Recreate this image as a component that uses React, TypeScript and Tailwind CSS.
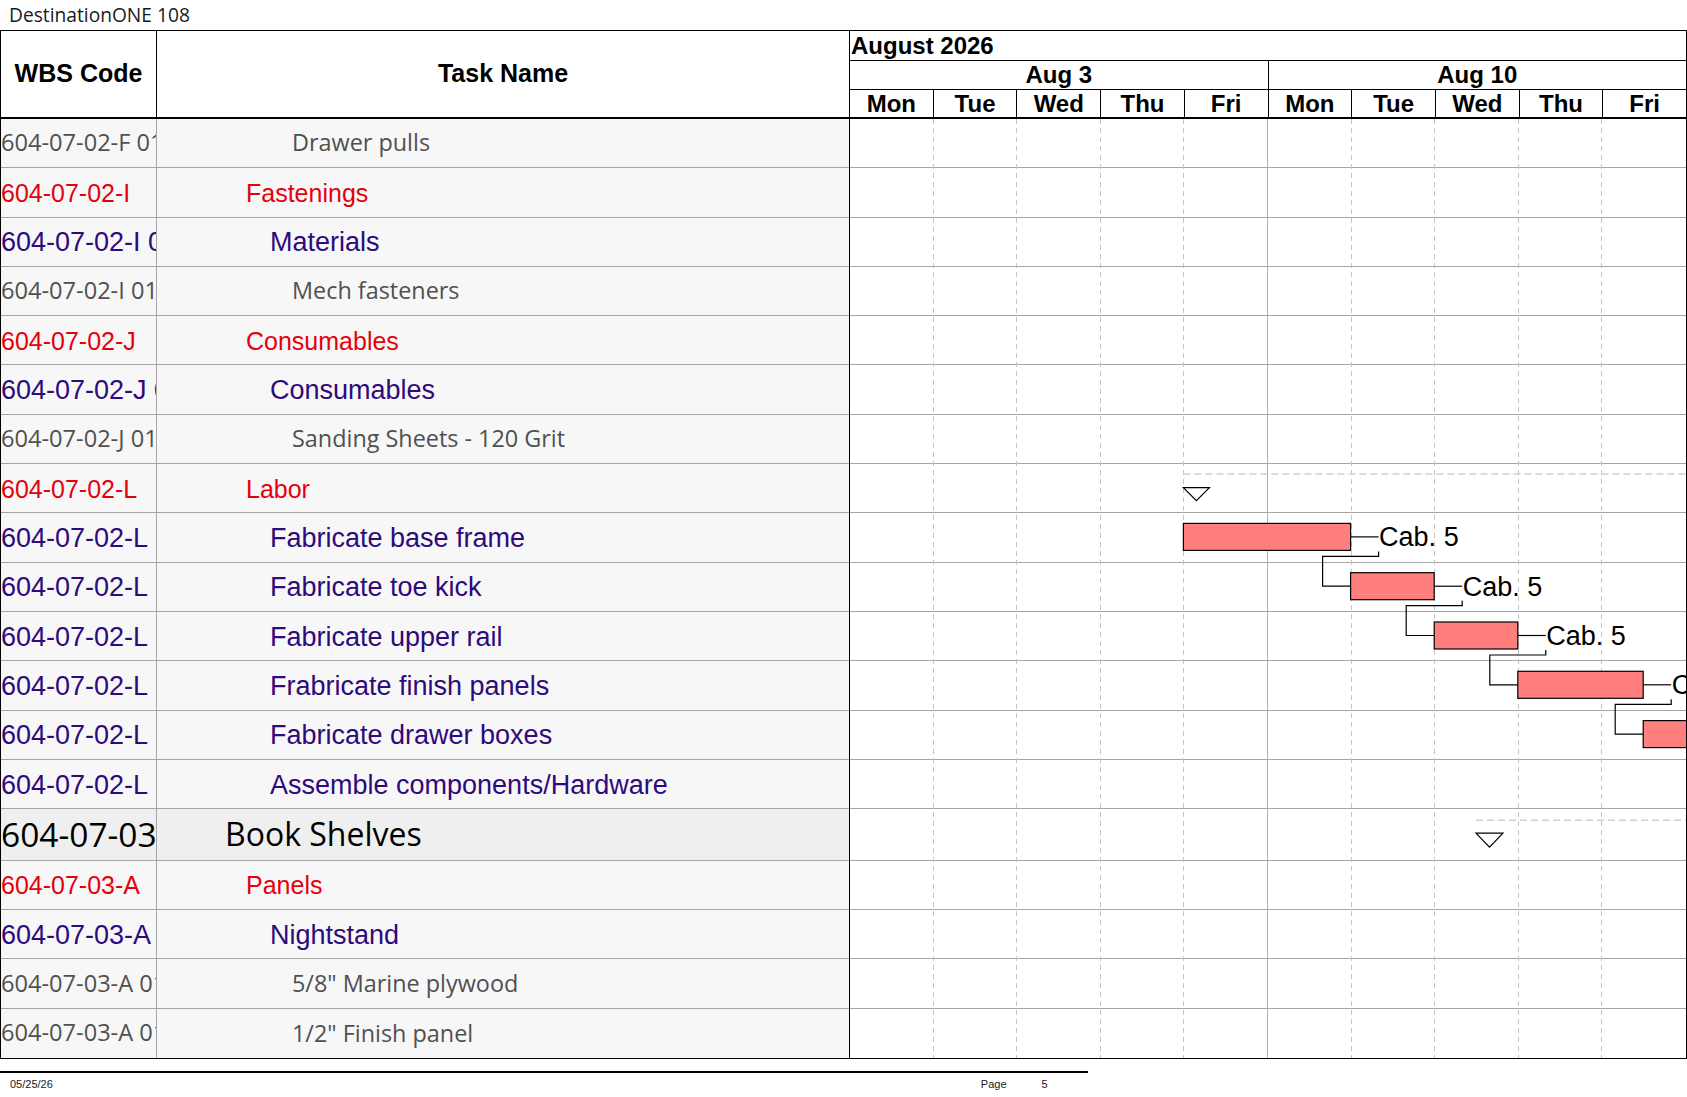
import React from "react";

const D = 83.6;
const H = 49.3;
const HB = 51.6;

type Row = {
  code: string;
  name: string;
  level: 1 | 2 | 3 | 4;
};

const rows: Row[] = [
  { code: "604-07-02-F 01-01", name: "Drawer pulls", level: 4 },
  { code: "604-07-02-I", name: "Fastenings", level: 2 },
  { code: "604-07-02-I 01", name: "Materials", level: 3 },
  { code: "604-07-02-I 01-01", name: "Mech fasteners", level: 4 },
  { code: "604-07-02-J", name: "Consumables", level: 2 },
  { code: "604-07-02-J 01", name: "Consumables", level: 3 },
  { code: "604-07-02-J 01-01", name: "Sanding Sheets - 120 Grit", level: 4 },
  { code: "604-07-02-L", name: "Labor", level: 2 },
  { code: "604-07-02-L", name: "Fabricate base frame", level: 3 },
  { code: "604-07-02-L", name: "Fabricate toe kick", level: 3 },
  { code: "604-07-02-L", name: "Fabricate upper rail", level: 3 },
  { code: "604-07-02-L", name: "Frabricate finish panels", level: 3 },
  { code: "604-07-02-L", name: "Fabricate drawer boxes", level: 3 },
  { code: "604-07-02-L", name: "Assemble components/Hardware", level: 3 },
  { code: "604-07-03", name: "Book Shelves", level: 1 },
  { code: "604-07-03-A", name: "Panels", level: 2 },
  { code: "604-07-03-A", name: "Nightstand", level: 3 },
  { code: "604-07-03-A 01-01", name: '5/8" Marine plywood', level: 4 },
  { code: "604-07-03-A 01-02", name: '1/2" Finish panel', level: 4 },
];

const rowTop = (i: number) => (i <= 14 ? i * H : 14 * H + HB + (i - 15) * H);
const xk = (k: number) => k * D - 1;
const BODY_H = rowTop(19);

const days = ["Mon", "Tue", "Wed", "Thu", "Fri", "Mon", "Tue", "Wed", "Thu", "Fri"];

const bars = [
  { r: 8, s: 4, e: 6 },
  { r: 9, s: 6, e: 7 },
  { r: 10, s: 7, e: 8 },
  { r: 11, s: 8, e: 9.5 },
  { r: 12, s: 9.5, e: 11 },
];

const codeClass: Record<number, string> = {
  1: "text-[33.5px] text-black font-['Open_Sans',sans-serif]",
  2: "text-[25px] text-[#e5000c] font-['Liberation_Sans',Arial,sans-serif] pt-[2px]",
  3: "text-[27px] text-[#2e0a7c] font-['Liberation_Sans',Arial,sans-serif] pt-[2px]",
  4: "text-[23.6px] text-[#505050] font-['Open_Sans',sans-serif]",
};

const nameClass: Record<number, string> = {
  1: "text-[32px] text-black font-['Open_Sans',sans-serif] pl-[68px]",
  2: "text-[25px] text-[#e5000c] font-['Liberation_Sans',Arial,sans-serif] pl-[89px] pt-[2px]",
  3: "text-[27px] text-[#2e0a7c] font-['Liberation_Sans',Arial,sans-serif] pl-[113px] pt-[2px]",
  4: "text-[23.4px] text-[#505050] font-['Open_Sans',sans-serif] pl-[135px]",
};

function GanttOverlay() {
  const barGeo = bars.map((b) => {
    const y = rowTop(b.r) + 10;
    const h = 27;
    return { x1: xk(b.s), x2: xk(b.e), y, h, mid: y + h / 2, bottom: y + h };
  });
  const laborTop = rowTop(7);
  const bookTop = rowTop(14);
  const lx = xk(4);
  const bx = xk(7.5);
  return (
    <svg
      className="absolute inset-0 pointer-events-none"
      width={836}
      height={BODY_H}
      viewBox={`0 0 836 ${BODY_H}`}
    >
      {Array.from({ length: 9 }).map((_, i) => {
        const k = i + 1;
        const x = Math.round(xk(k)) + 0.5;
        return k === 5 ? (
          <line key={k} x1={x} x2={x} y1={0} y2={BODY_H} stroke="#b0b0b0" strokeWidth={1} />
        ) : (
          <line key={k} x1={x} x2={x} y1={0} y2={BODY_H} stroke="#c4c4c4" strokeWidth={1} strokeDasharray="5 4" />
        );
      })}
      {/* summary: Labor */}
      <line x1={lx} x2={836} y1={laborTop + 10} y2={laborTop + 10} stroke="#cfcfcf" strokeWidth={1.5} strokeDasharray="7 4" />
      <polygon
        points={`${lx},${laborTop + 23.5} ${lx + 26},${laborTop + 23.5} ${lx + 13},${laborTop + 36.5}`}
        fill="#fff"
        stroke="#000"
        strokeWidth={1.2}
      />
      {/* summary: Book Shelves */}
      <line x1={bx} x2={836} y1={bookTop + 11} y2={bookTop + 11} stroke="#cfcfcf" strokeWidth={1.5} strokeDasharray="7 4" />
      <polygon
        points={`${bx},${bookTop + 24} ${bx + 27},${bookTop + 24} ${bx + 13.5},${bookTop + 38}`}
        fill="#fff"
        stroke="#000"
        strokeWidth={1.2}
      />
      {/* links */}
      {barGeo.slice(0, -1).map((g, i) => {
        const n = barGeo[i + 1];
        const sx = g.x2 + 28;
        return (
          <path
            key={"l" + i}
            d={`M ${sx} ${g.bottom + 1} V ${g.bottom + 6} H ${n.x1 - 28} V ${n.mid} H ${n.x1}`}
            fill="none"
            stroke="#000"
            strokeWidth={1.2}
          />
        );
      })}
      {/* bars */}
      {barGeo.map((g, i) => (
        <g key={"b" + i}>
          <rect x={g.x1} y={g.y} width={g.x2 - g.x1} height={g.h} fill="#ff7f7f" stroke="#000" strokeWidth={1.2} />
          <line x1={g.x2} x2={g.x2 + 28} y1={g.mid} y2={g.mid} stroke="#000" strokeWidth={1.2} />
          <text
            x={g.x2 + 28.5}
            y={g.mid + 9.5}
            fontSize={27}
            fontFamily="'Liberation Sans', Arial, sans-serif"
            fill="#000"
          >
            Cab. 5
          </text>
        </g>
      ))}
    </svg>
  );
}

export default function App() {
  return (
    <div className="w-[1687px] h-[1097px] bg-white relative overflow-hidden font-['Liberation_Sans',Arial,sans-serif]">
      <div className="h-[30px] pl-[9px] flex items-center text-[19.2px] text-[#1a1a1a] font-['Open_Sans',sans-serif] leading-none">
        DestinationONE 108
      </div>

      <div className="border border-black w-[1687px]">
        {/* Header */}
        <div className="flex h-[88px] border-b-2 border-black">
          <div className="w-[156px] shrink-0 border-r border-black flex items-center justify-center text-[25px] font-bold text-black">
            WBS Code
          </div>
          <div className="w-[693px] shrink-0 border-r border-black flex items-center justify-center text-[25px] font-bold text-black">
            Task Name
          </div>
          <div className="flex-1 flex flex-col text-[24px] font-bold text-black leading-none">
            <div className="h-[30px] border-b border-black flex items-center pl-[1px]">August 2026</div>
            <div className="h-[29px] border-b border-black flex">
              <div className="flex-1 border-r border-black flex items-center justify-center">Aug 3</div>
              <div className="flex-1 flex items-center justify-center">Aug 10</div>
            </div>
            <div className="flex-1 flex">
              {days.map((d, i) => (
                <div
                  key={i}
                  className={
                    "flex-1 flex items-center justify-center " + (i < 9 ? "border-r border-black" : "")
                  }
                >
                  {d}
                </div>
              ))}
            </div>
          </div>
        </div>

        {/* Body */}
        <div className="flex">
          <div className="w-[849px] shrink-0 border-r border-black">
            {rows.map((r, i) => {
              const book = r.level === 1;
              const last = i === rows.length - 1;
              return (
                <div
                  key={i}
                  className={
                    "flex " +
                    (book ? "h-[51.6px] bg-[#efefef] " : "h-[49.3px] bg-[#f7f7f7] ") +
                    (last ? "" : "border-b border-[#a6a6a6]")
                  }
                >
                  <div
                    className={
                      "w-[156px] shrink-0 border-r border-[#a6a6a6] overflow-hidden whitespace-nowrap flex items-center leading-none " +
                      codeClass[r.level]
                    }
                  >
                    {r.code}
                  </div>
                  <div
                    className={
                      "flex-1 overflow-hidden whitespace-nowrap flex items-center leading-none " + nameClass[r.level]
                    }
                  >
                    {r.name}
                  </div>
                </div>
              );
            })}
          </div>
          <div className="flex-1 relative overflow-hidden bg-white">
            {rows.map((r, i) => {
              const book = r.level === 1;
              const last = i === rows.length - 1;
              return (
                <div
                  key={i}
                  className={
                    (book ? "h-[51.6px] " : "h-[49.3px] ") + (last ? "" : "border-b border-[#a6a6a6]")
                  }
                />
              );
            })}
            <GanttOverlay />
          </div>
        </div>
      </div>

      {/* Footer */}
      <div className="mt-[12px] w-[1088px] border-t-2 border-black h-[24px] relative text-[11px] text-[#222] font-['Liberation_Sans_Narrow','Liberation_Sans',Arial,sans-serif]">
        <div className="flex items-center h-full">
          <span className="ml-[10px]">05/25/26</span>
          <span className="ml-[928px]">Page</span>
          <span className="ml-[35px]">5</span>
        </div>
      </div>
    </div>
  );
}
